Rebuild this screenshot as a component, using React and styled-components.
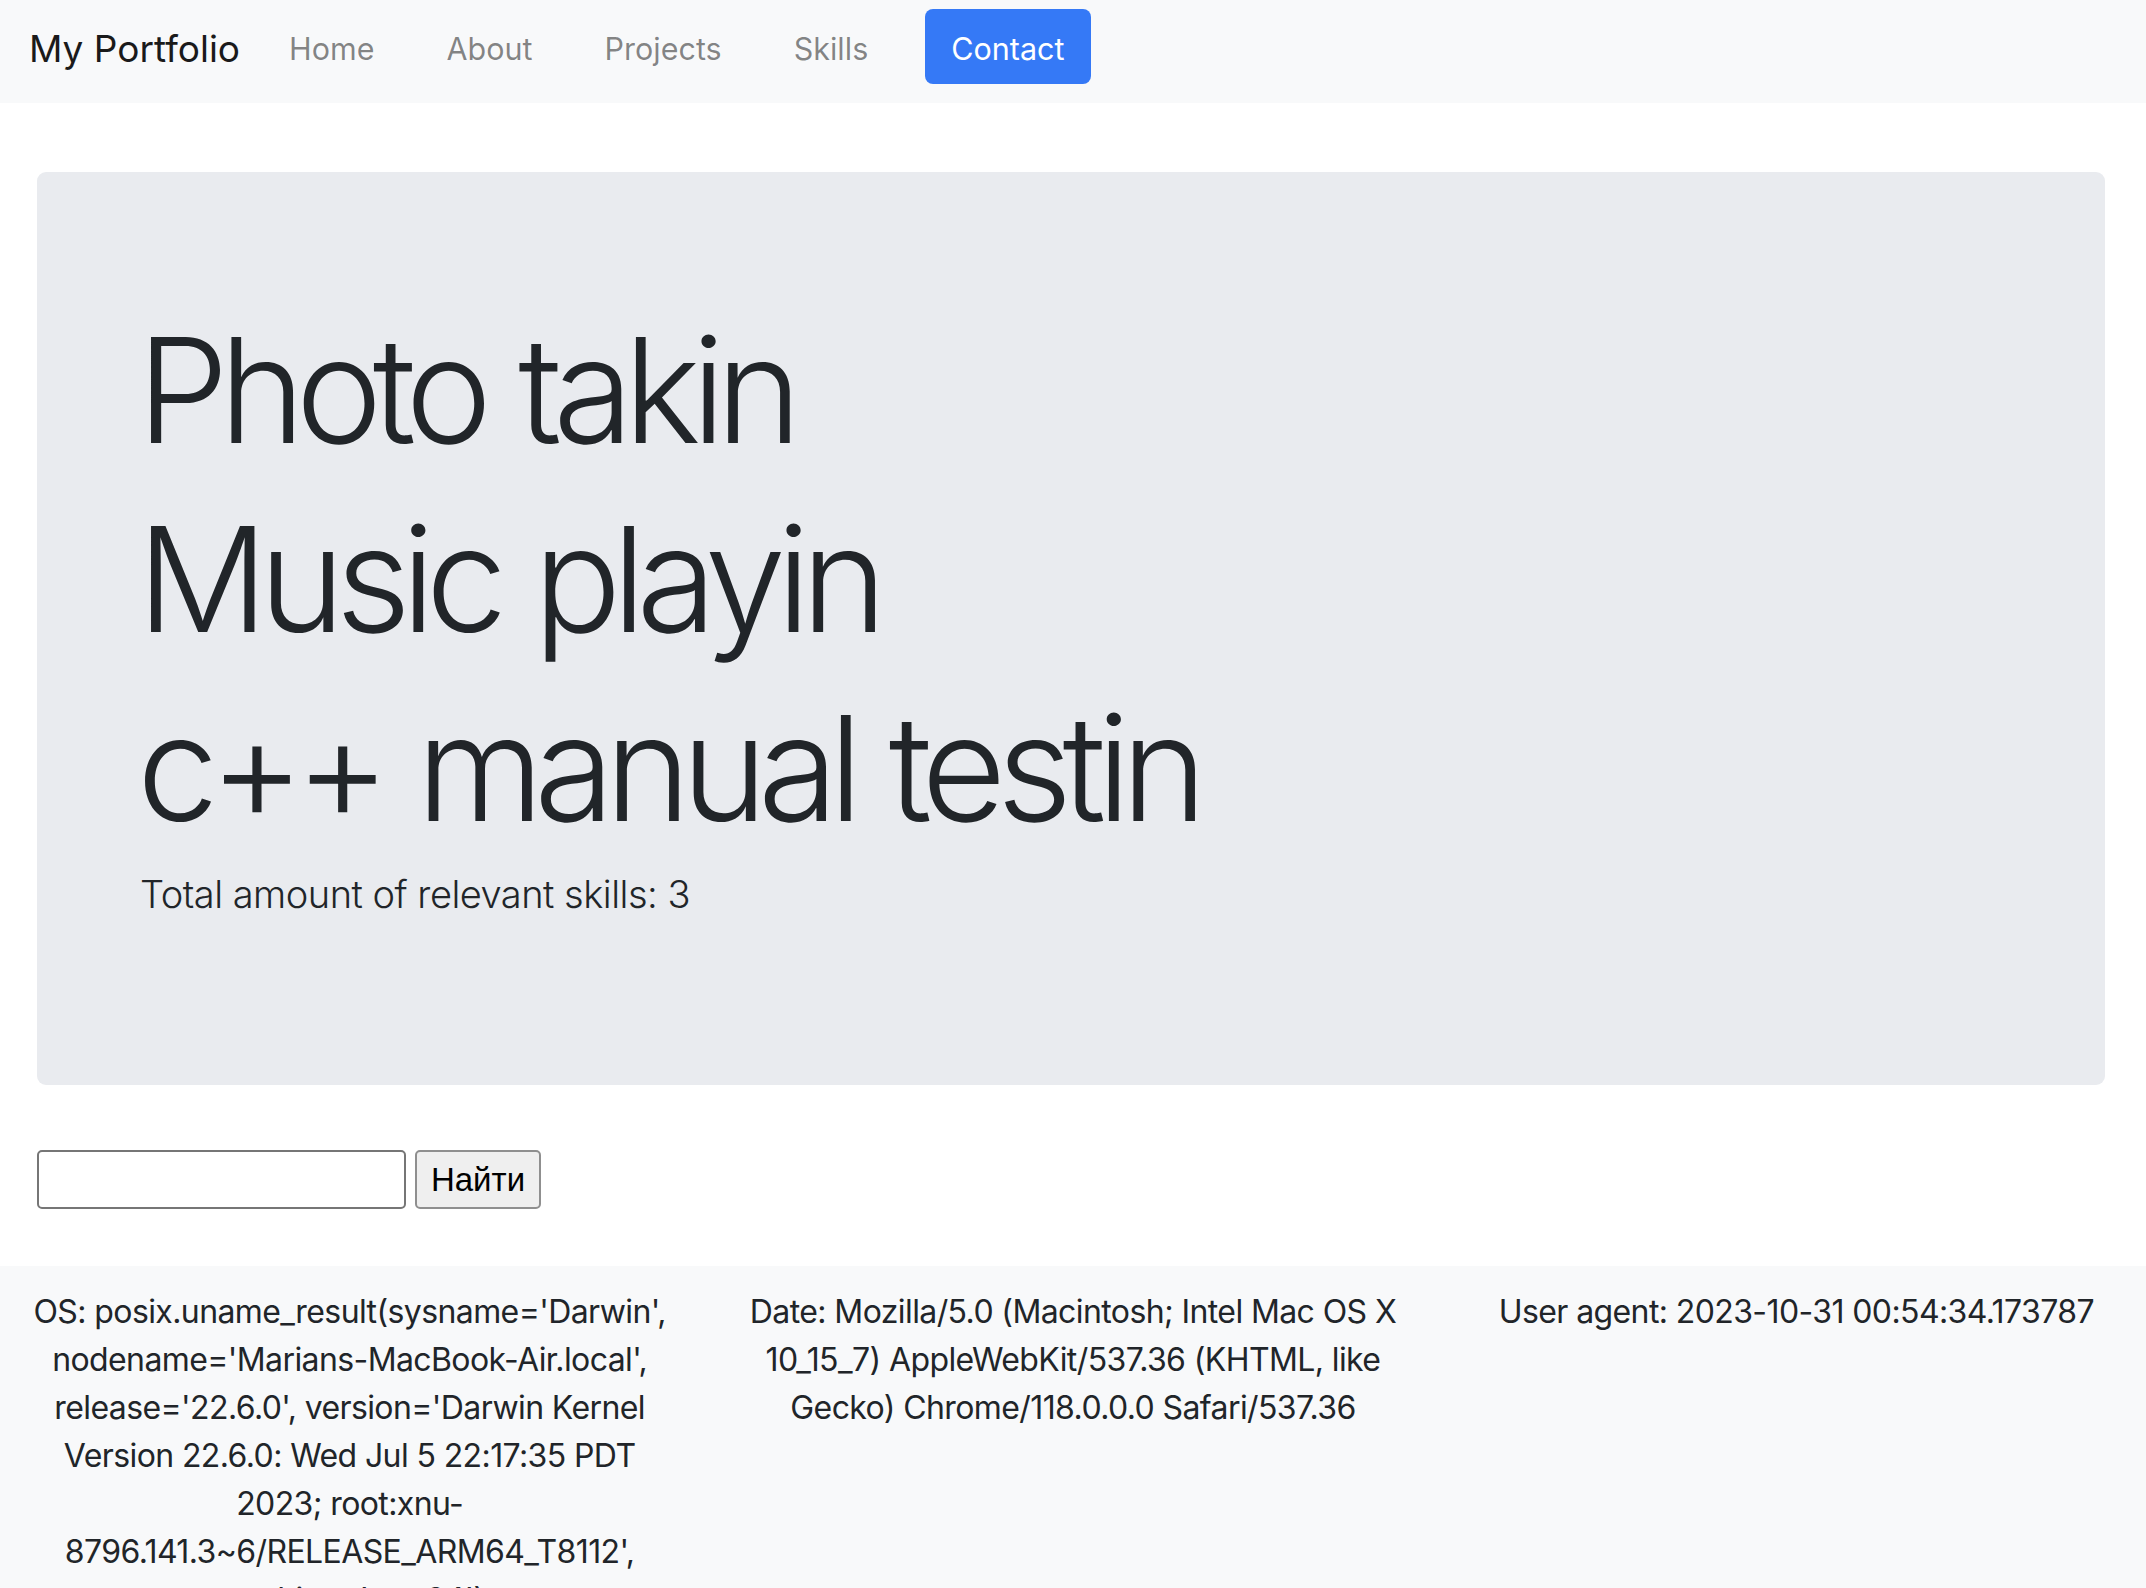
import React from "react";
import styled, { createGlobalStyle } from "styled-components";

const Global = createGlobalStyle`
  html, body { margin: 0; padding: 0; background: #ffffff; }
  body {
    font-family: Inter, "Noto Sans", "Liberation Sans", sans-serif;
    color: #212529;
    -webkit-font-smoothing: antialiased;
  }
  * { box-sizing: border-box; }
`;

const Navbar = styled.nav`
  display: flex;
  align-items: center;
  height: 103px;
  padding: 0 0 10px 29px;
  background: #f8f9fa;
`;

const Brand = styled.a`
  font-size: 37px;
  color: #1a1a1a;
  text-decoration: none;
  margin-right: 13px;
  padding-top: 3px;
  line-height: 1;
`;

const NavLink = styled.a`
  font-size: 30.5px;
  line-height: 1;
  padding: 5px ${(p) => (p.$active ? "26px" : "36px")} 0;
  margin-left: ${(p) => (p.$active ? "21px" : "0")};
  height: 75px;
  display: flex;
  align-items: center;
  border-radius: 8px;
  text-decoration: none;
  color: ${(p) => (p.$active ? "#ffffff" : "rgba(0,0,0,0.48)")};
  background: ${(p) => (p.$active ? "#3579f6" : "transparent")};
`;

const Main = styled.main`
  padding: 69px 41px 0 37px;
`;

const Jumbotron = styled.section`
  background: #e9ebef;
  border-radius: 9px;
  height: 913px;
  padding: 131px 100px 0 100px;
`;

const Display = styled.h1`
  font-size: 146px;
  font-weight: 300;
  line-height: 1.2;
  margin: 0 0 14px 0;
  letter-spacing: -9.5px;
  word-spacing: 4px;
  color: #212529;
`;

const Lead = styled.p`
  font-size: 38px;
  font-weight: 300;
  margin: 2px 0 0 3px;
  letter-spacing: -0.5px;
  color: #212529;
`;

const SearchForm = styled.form`
  display: flex;
  gap: 9px;
  margin: 65px 0 57px 0;
`;

const SearchInput = styled.input`
  width: 369px;
  height: 59px;
  border: 2px solid #767676;
  border-radius: 5px;
  background: #ffffff;
  padding: 0 6px;
  font-size: 30px;
`;

const SearchButton = styled.button`
  width: 126px;
  height: 59px;
  border: 2px solid #8f8f8f;
  border-radius: 5px;
  background: #efefef;
  font-family: "Liberation Sans", Arial, sans-serif;
  font-size: 33px;
  color: #000000;
  padding: 0;
`;

const Footer = styled.footer`
  background: #f8f9fa;
  padding: 22px 0 40px;
  overflow: hidden;
`;

const Row = styled.div`
  display: grid;
  grid-template-columns: repeat(3, 1fr);
  margin: 0 -12px 0 -12px;
`;

const Col = styled.div`
  padding: 0 34px;
  text-align: center;
  font-size: 32px;
  line-height: 48px;
  letter-spacing: -0.6px;
  color: #212529;
  overflow-wrap: break-word;
`;

export default function App() {
  const skills = ["Photo takin", "Music playin", "c++ manual testin"];
  return (
    <>
      <Global />
      <Navbar>
        <Brand href="#">My Portfolio</Brand>
        <NavLink href="#">Home</NavLink>
        <NavLink href="#">About</NavLink>
        <NavLink href="#">Projects</NavLink>
        <NavLink href="#">Skills</NavLink>
        <NavLink href="#" $active>Contact</NavLink>
      </Navbar>
      <Main>
        <Jumbotron>
          {skills.map((s) => (
            <Display key={s}>{s}</Display>
          ))}
          <Lead>Total amount of relevant skills: {skills.length}</Lead>
        </Jumbotron>
        <SearchForm onSubmit={(e) => e.preventDefault()}>
          <SearchInput type="text" />
          <SearchButton type="submit">Найти</SearchButton>
        </SearchForm>
      </Main>
      <Footer>
        <Row>
          <Col>
            OS: posix.uname_result(sysname='Darwin', nodename='Marians-MacBook-Air.local', release='22.6.0', version='Darwin Kernel Version 22.6.0: Wed Jul 5 22:17:35 PDT 2023; root:xnu-8796.141.3~6/RELEASE_ARM64_T8112', machine='arm64')
          </Col>
          <Col>
            Date: Mozilla/5.0 (Macintosh; Intel Mac OS X 10_15_7) AppleWebKit/537.36 (KHTML, like Gecko) Chrome/118.0.0.0 Safari/537.36
          </Col>
          <Col>User agent: 2023-10-31 00:54:34.173787</Col>
        </Row>
      </Footer>
    </>
  );
}
